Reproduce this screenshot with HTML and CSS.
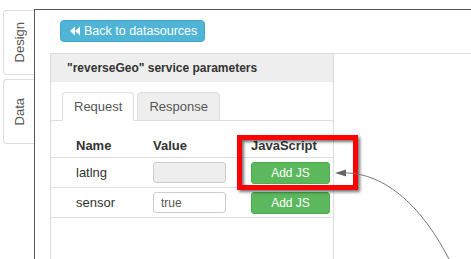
FILE: index.html
```html
<!DOCTYPE html>
<html>
<head>
<meta charset="utf-8">
<link rel="stylesheet" href="styles.css">
</head>
<body>
<div class="app">
  <nav class="side">
    <div class="stab"><span>Design</span></div>
    <div class="stab"><span>Data</span></div>
  </nav>
  <main class="main">
    <button class="btn-back"><svg class="ico" viewBox="0 0 10 10" width="10" height="10"><polygon points="0,5 5,0.5 5,9.5" fill="#fff"/><polygon points="5,5 10,0.5 10,9.5" fill="#fff"/></svg>Back to datasources</button>
    <div class="row">
      <section class="panel">
        <div class="panel-head">"reverseGeo" service parameters</div>
        <ul class="tabs">
          <li class="tab active">Request</li>
          <li class="tab">Response</li>
        </ul>
        <div class="ptable">
          <div class="tr th"><div>Name</div><div>Value</div><div>JavaScript</div></div>
          <div class="tr"><div>latlng</div><div><input class="inp" disabled></div><div><button class="btn-js">Add JS</button></div></div>
          <div class="tr"><div>sensor</div><div><input class="inp" value="true"></div><div><button class="btn-js">Add JS</button></div></div>
        </div>
      </section>
      <div class="rest"></div>
    </div>
  </main>
</div>
<div class="callout"></div>
<svg class="arrow" width="471" height="259" viewBox="0 0 471 259">
  <path d="M343,173 C380,172 420,200 452,265" fill="none" stroke="#777" stroke-width="1"/>
  <polygon points="335,173 346,169.5 346,176.5" fill="#666"/>
</svg>
</body>
</html>
```
FILE: styles.css
```css
html, body {
  margin: 0;
  height: 100%;
  overflow: hidden;
  background: #fff;
}
body {
  font-family: "Liberation Sans", Arial, sans-serif;
  color: #333;
}
.app {
  display: flex;
  height: 259px;
}
.side {
  width: 34px;
  box-sizing: border-box;
  padding: 10px 0 0 3px;
  display: flex;
  flex-direction: column;
  gap: 4px;
}
.stab {
  height: 65px;
  box-sizing: border-box;
  border: 1px solid #ddd;
  border-right: 0;
  border-radius: 4px 0 0 4px;
  display: flex;
  align-items: center;
  justify-content: center;
}
.stab span {
  writing-mode: vertical-rl;
  transform: rotate(180deg);
  font-size: 13px;
  color: #555;
}
.main {
  flex: 1;
  margin-top: 9px;
  border-top: 1px solid #555;
  border-left: 1px solid #555;
  display: flex;
  flex-direction: column;
  align-items: flex-start;
}
.btn-back {
  margin: 10px 0 0 25px;
  height: 22px;
  box-sizing: border-box;
  display: inline-flex;
  align-items: center;
  gap: 4px;
  padding: 0 7px 0 9px;
  background: #4fb4d6;
  border: 1px solid #42a8cb;
  border-radius: 4px;
  color: #fff;
  font-family: "Liberation Sans", Arial, sans-serif;
  font-size: 12.5px;
}
.ico {
  display: block;
}
.row {
  align-self: stretch;
  flex: 1;
  margin: 11px 0 0 15px;
  display: flex;
  border-top: 1px solid #ddd;
}
.panel {
  width: 284px;
  box-sizing: border-box;
  border-left: 1px solid #ddd;
  border-right: 1px solid #ddd;
}
.panel-head {
  height: 28px;
  background: #eee;
  font-weight: bold;
  font-size: 12px;
  padding-left: 16px;
  display: flex;
  align-items: center;
}
.tabs {
  list-style: none;
  margin: 10px 0 0;
  padding: 0 0 0 11px;
  display: flex;
  gap: 3px;
  border-bottom: 1px solid #ddd;
}
.tab {
  height: 29px;
  box-sizing: border-box;
  margin-bottom: -1px;
  padding: 0 11px;
  border: 1px solid #ddd;
  border-radius: 4px 4px 0 0;
  background: #eee;
  font-size: 13px;
  color: #555;
  display: flex;
  align-items: center;
}
.tab.active {
  background: #fff;
  border-bottom-color: #fff;
}
.tr {
  display: grid;
  grid-template-columns: 77px 98px 1fr;
  align-items: center;
  padding-left: 25px;
  height: 30px;
  box-sizing: border-box;
  border-bottom: 1px solid #ddd;
  font-size: 13px;
}
.tr.th {
  height: 37px;
  align-items: end;
  padding-bottom: 4px;
  font-weight: bold;
}
.inp {
  display: block;
  width: 73px;
  height: 21px;
  box-sizing: border-box;
  margin: 0;
  padding: 0 7px;
  border: 1px solid #ccc;
  border-radius: 3px;
  background: #fff;
  font-family: "Liberation Sans", Arial, sans-serif;
  font-size: 12px;
  color: #555;
}
.inp:disabled {
  background: #eee;
}
.btn-js {
  display: block;
  width: 79px;
  height: 22px;
  box-sizing: border-box;
  margin: 0;
  padding: 0;
  background: #5cb85c;
  border: 1px solid #4cae4c;
  border-radius: 3px;
  color: #fff;
  font-family: "Liberation Sans", Arial, sans-serif;
  font-size: 12px;
}
.callout {
  position: absolute;
  left: 237px;
  top: 135px;
  width: 121px;
  height: 55px;
  box-sizing: border-box;
  border: 5px solid #f00;
  box-shadow: 2px 2px 3px rgba(0,0,0,0.55), inset 2px 2px 3px rgba(0,0,0,0.55);
}
.arrow {
  position: absolute;
  left: 0;
  top: 0;
  pointer-events: none;
}
```
